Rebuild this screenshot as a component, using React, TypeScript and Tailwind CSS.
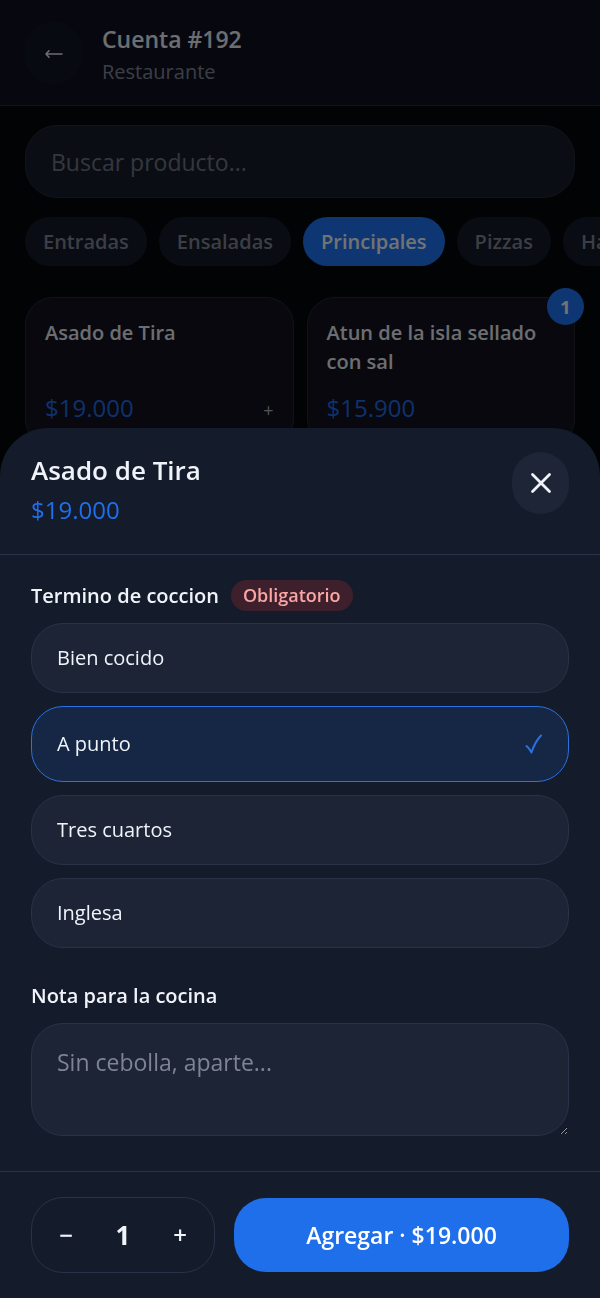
import React, { useState } from 'react';
import { clsx } from 'clsx';

interface Product {
  name: string;
  price: string;
  count?: number;
}

const categories = ['Entradas', 'Ensaladas', 'Principales', 'Pizzas', 'Hamburguesas'];

const products: Product[] = [
  { name: 'Asado de Tira', price: '$19.000' },
  { name: 'Atun de la isla sellado con sal', price: '$15.900', count: 1 },
];

const cookingOptions = ['Bien cocido', 'A punto', 'Tres cuartos', 'Inglesa'];

const UNIT_PRICE = 19000;

function formatPrice(value: number) {
  return '$' + value.toString().replace(/\B(?=(\d{3})+$)/g, '.');
}

function ProductCard({ product }: { product: Product }) {
  return (
    <button className="relative flex h-[150px] flex-col rounded-[28px] border border-[#292b33] bg-[#12131f] px-[19px] pt-5 text-left">
      <span className="h-[60px] text-xl leading-[29px] font-semibold text-[#f0f3fa]">{product.name}</span>
      <span className="mt-3 flex w-full items-center justify-between">
        <span className="text-2xl leading-9 font-medium text-[#1f6feb]">{product.price}</span>
        {!product.count && <span className="pt-1 text-lg text-[#b4bac8]">+</span>}
      </span>
      {product.count && (
        <span className="absolute -top-[10px] -right-[10px] flex size-[37px] items-center justify-center rounded-full bg-[#1f79ff] text-lg font-bold text-white">
          {product.count}
        </span>
      )}
    </button>
  );
}

function Menu() {
  const [category, setCategory] = useState('Principales');

  return (
    <div className="min-h-screen bg-[#05080d]">
      <header className="flex h-[106px] items-center gap-5 border-b border-[#292b3d] bg-[#111322] px-[25px]">
        <button aria-label="Volver" className="flex h-[62px] w-[57px] items-center justify-center rounded-full bg-[#111a26] text-[#f0f3fa]">
          <svg width="18" height="12" viewBox="0 0 18 12" fill="none" stroke="currentColor" strokeWidth="1.6" strokeLinecap="round" strokeLinejoin="round">
            <path d="M17 7H1M4 3.800L1 7l3 3.200" />
          </svg>
        </button>
        <div className="pt-1">
          <h1 className="text-[23px] leading-[34px] font-semibold text-[#f0f3fa]">Cuenta #192</h1>
          <p className="text-xl leading-8 text-[#858b9b]">Restaurante</p>
        </div>
      </header>

      <main className="px-[25px] pt-[19px]">
        <input
          type="search"
          aria-label="Buscar producto"
          placeholder="Buscar producto..."
          className="h-[73px] w-full rounded-[32px] border border-[#292d38] bg-[#181f2e] px-[25px] text-[23px] text-white placeholder:text-[#767b87]"
        />

        <div className="-mr-[25px] mt-[19px] flex gap-3 overflow-hidden">
          {categories.map((name) => (
            <button
              key={name}
              onClick={() => setCategory(name)}
              className={clsx(
                'h-[49px] shrink-0 rounded-full px-[18px] text-xl font-semibold',
                name === category ? 'bg-[#1f79ff] text-white' : 'bg-[#151b28] text-[#858b9b]'
              )}
            >
              {name}
            </button>
          ))}
        </div>

        <div className="mt-[31px] grid grid-cols-2 gap-[13px]">
          {products.map((product) => (
            <ProductCard key={product.name} product={product} />
          ))}
        </div>
      </main>
    </div>
  );
}

function ProductSheet() {
  const [cooking, setCooking] = useState('A punto');
  const [note, setNote] = useState('');
  const [quantity, setQuantity] = useState(1);

  return (
    <div role="dialog" aria-labelledby="sheet-title" className="w-full rounded-t-[48px] bg-[#141b2a]">
      <div className="flex items-start justify-between border-b border-[#2a3249] px-[31px] pt-6 pb-[26px]">
        <div>
          <h2 id="sheet-title" className="text-[26px] leading-9 font-semibold text-[#f0f3fa]">Asado de Tira</h2>
          <p className="mt-1 text-2xl leading-9 font-medium text-[#1f6feb]">{formatPrice(UNIT_PRICE)}</p>
        </div>
        <button aria-label="Cerrar" className="flex h-[62px] w-[57px] items-center justify-center rounded-full bg-[#1d2536] text-[#f0f3fa]">
          <svg width="22" height="22" viewBox="0 0 22 22" fill="none" stroke="currentColor" strokeWidth="2.8" strokeLinecap="round">
            <path d="M2.500 2.500l17 17M19.500 2.500l-17 17" />
          </svg>
        </button>
      </div>

      <div className="px-[31px] pt-[25px] pb-[35px]">
        <fieldset>
          <legend className="mb-3 flex items-center gap-3 text-xl leading-[31px] font-semibold text-[#f0f3fa]">
            Termino de coccion
            <span className="rounded-full bg-[#3d202b] px-3 text-lg leading-[31px] font-semibold text-[#fca5a5]">Obligatorio</span>
          </legend>
          <div className="flex flex-col gap-[13px]">
            {cookingOptions.map((option) => {
              const isActive = option === cooking;
              return (
                <label
                  key={option}
                  className={clsx(
                    'flex cursor-pointer items-center justify-between rounded-[32px] border px-[25px] text-xl text-[#f0f3fa]',
                    isActive ? 'h-[76px] border-[#2a72df] bg-[#152745]' : 'h-[70px] border-[#2a3249] bg-[#1c2436]'
                  )}
                >
                  <input
                    type="radio"
                    name="cooking"
                    value={option}
                    checked={isActive}
                    onChange={() => setCooking(option)}
                    className="sr-only"
                  />
                  {option}
                  {isActive && (
                    <svg width="18" height="20" viewBox="0 0 18 20" fill="none" stroke="#2a72df" strokeWidth="2" strokeLinecap="round" strokeLinejoin="round">
                      <path d="M1.500 12C3.500 13.500 5 15.500 6.500 18.500C8.500 12.500 11.500 6 16 1.500" />
                    </svg>
                  )}
                </label>
              );
            })}
          </div>
        </fieldset>

        <label htmlFor="note" className="mt-8 block text-xl leading-[31px] font-semibold text-[#f0f3fa]">
          Nota para la cocina
        </label>
        <textarea
          id="note"
          value={note}
          onChange={(e) => setNote(e.target.value)}
          placeholder="Sin cebolla, aparte..."
          className="mt-3 block h-[113px] w-full rounded-[32px] border border-[#2a3249] bg-[#1c2436] px-[25px] py-5 text-[23px] leading-9 text-[#f0f3fa] placeholder:text-[#7e8495]"
        />
      </div>

      <div className="flex items-center gap-[19px] border-t border-[#2a3249] px-[31px] py-[25px]">
        <div className="flex h-[76px] w-[184px] items-center justify-between rounded-[32px] border border-[#2a3249] px-2 text-[#f0f3fa]">
          <button
            aria-label="Quitar uno"
            onClick={() => setQuantity(Math.max(1, quantity - 1))}
            className="size-[52px] text-2xl font-semibold"
          >
            −
          </button>
          <span className="text-[26px] font-bold">{quantity}</span>
          <button aria-label="Sumar uno" onClick={() => setQuantity(quantity + 1)} className="size-[52px] text-2xl font-semibold">
            +
          </button>
        </div>
        <button className="h-[74px] flex-1 rounded-[32px] bg-[#1f6feb] text-[23px] font-semibold text-white">
          Agregar · {formatPrice(UNIT_PRICE * quantity)}
        </button>
      </div>
    </div>
  );
}

export default function App() {
  return (
    <div className="relative min-h-screen overflow-hidden font-['Open_Sans','Noto_Sans',sans-serif]">
      <Menu />
      <div className="fixed inset-0 flex items-end bg-black/55">
        <ProductSheet />
      </div>
    </div>
  );
}
